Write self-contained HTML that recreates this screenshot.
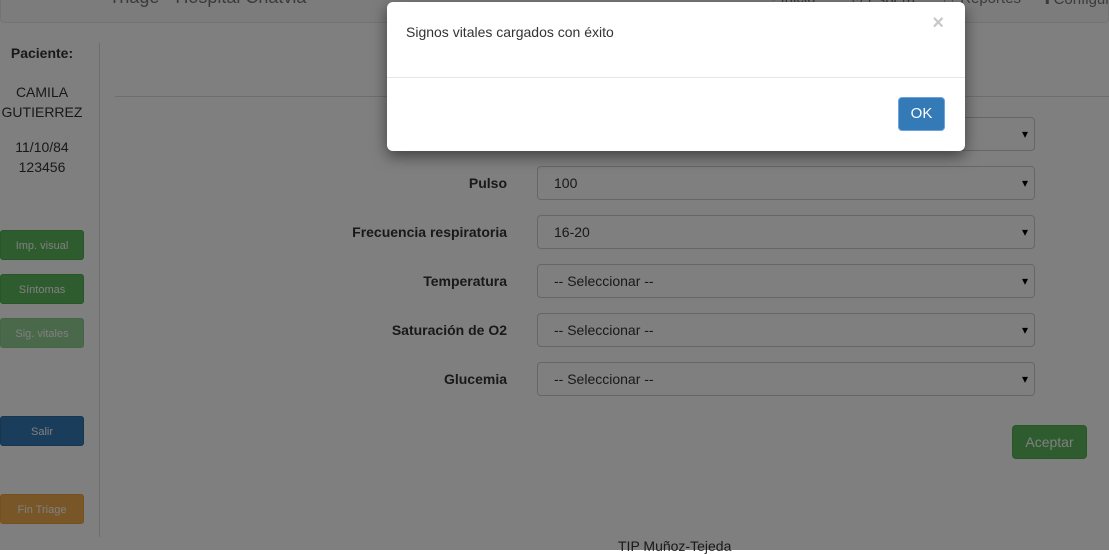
<!DOCTYPE html>
<html><head><meta charset="utf-8"><style>
body{margin:0;width:1109px;height:550px;overflow:hidden;font-family:"Liberation Sans",sans-serif;font-size:14px;color:#333;background:#fff;position:relative}
.nav{position:absolute;left:0;top:-30px;width:1107px;height:51px;background:#f8f8f8;border:1px solid #e7e7e7;border-radius:4px}
.nav span{position:absolute;top:19px;color:#777;font-size:15px;white-space:nowrap}
.side{position:absolute;left:0;top:43px;width:99px;height:494px;border-right:1px solid #ddd}
.side div{width:84px;text-align:center}
.b{position:absolute;left:0;width:84px;height:30px;border-radius:3px;color:#fff;font-size:11px;line-height:30px;text-align:center}
.g{background:#5cb85c;border:1px solid #4cae4c;box-sizing:border-box}
.lbl{position:absolute;right:602px;font-weight:bold;font-size:14px}
.sel{position:absolute;left:537px;width:498px;height:34px;border:1px solid #ccc;border-radius:4px;box-sizing:border-box;padding-left:16px;line-height:32px}
.sel:after{content:"▾";position:absolute;right:6px;top:0;font-size:12px;color:#000}
.ov{position:absolute;left:0;top:0;width:1109px;height:550px;background:rgba(0,0,0,.5)}
.modal{position:absolute;left:387px;top:2px;width:578px;height:149px;background:#fff;border-radius:6px;box-shadow:0 5px 15px rgba(0,0,0,.5)}
</style></head><body>
<div class="nav"><span style="left:108px;font-size:18px;top:16px">Triage - Hospital Chatvia</span><span style="left:770px">▪ Inicio</span><span style="left:850px">⊙ Espera</span><span style="left:940px">↑↑ Reportes</span><span style="left:1040px">✚Configurar</span></div>
<div class="side">
<div style="font-weight:bold;margin-top:2px">Paciente:</div>
<div style="margin-top:21px;line-height:20px">CAMILA<br>GUTIERREZ</div>
<div style="margin-top:15px;line-height:20px">11/10/84<br>123456</div>
</div>
<div class="b g" style="top:230px">Imp. visual</div>
<div class="b g" style="top:274px">Síntomas</div>
<div class="b g" style="top:318px;opacity:.65">Sig. vitales</div>
<div class="b" style="top:416px;background:#337ab7;border:1px solid #2e6da4;box-sizing:border-box">Salir</div>
<div class="b" style="top:494px;background:#f0ad4e;border:1px solid #eea236;box-sizing:border-box">Fin Triage</div>
<div style="position:absolute;left:115px;top:96px;width:994px;border-top:1px solid #ddd"></div>
<div class="sel" style="top:117px">--</div>
<div class="lbl" style="top:175px">Pulso</div><div class="sel" style="top:166px">100</div>
<div class="lbl" style="top:224px">Frecuencia respiratoria</div><div class="sel" style="top:215px">16-20</div>
<div class="lbl" style="top:273px">Temperatura</div><div class="sel" style="top:264px">-- Seleccionar --</div>
<div class="lbl" style="top:322px">Saturación de O2</div><div class="sel" style="top:313px">-- Seleccionar --</div>
<div class="lbl" style="top:371px">Glucemia</div><div class="sel" style="top:362px">-- Seleccionar --</div>
<div style="position:absolute;left:1012px;top:425px;width:75px;height:34px;background:#5cb85c;border:1px solid #4cae4c;box-sizing:border-box;border-radius:4px;color:#fff;line-height:32px;text-align:center">Aceptar</div>
<div style="position:absolute;left:618px;top:538px">TIP Muñoz-Tejeda</div>
<div class="ov"></div>
<div class="modal">
<div style="position:absolute;left:19px;top:22px">Signos vitales cargados con éxito</div>
<div style="position:absolute;right:21px;top:10px;font-size:20px;font-weight:bold;color:#c8c8c8">×</div>
<div style="position:absolute;left:0;top:75px;width:100%;border-top:1px solid #e5e5e5"></div>
<div style="position:absolute;left:511px;top:95px;width:47px;height:34px;background:#337ab7;border:1px solid #6da2e0;box-sizing:border-box;border-radius:4px;color:#fff;line-height:32px;text-align:center;font-size:15px">OK</div>
</div>
</body></html>
